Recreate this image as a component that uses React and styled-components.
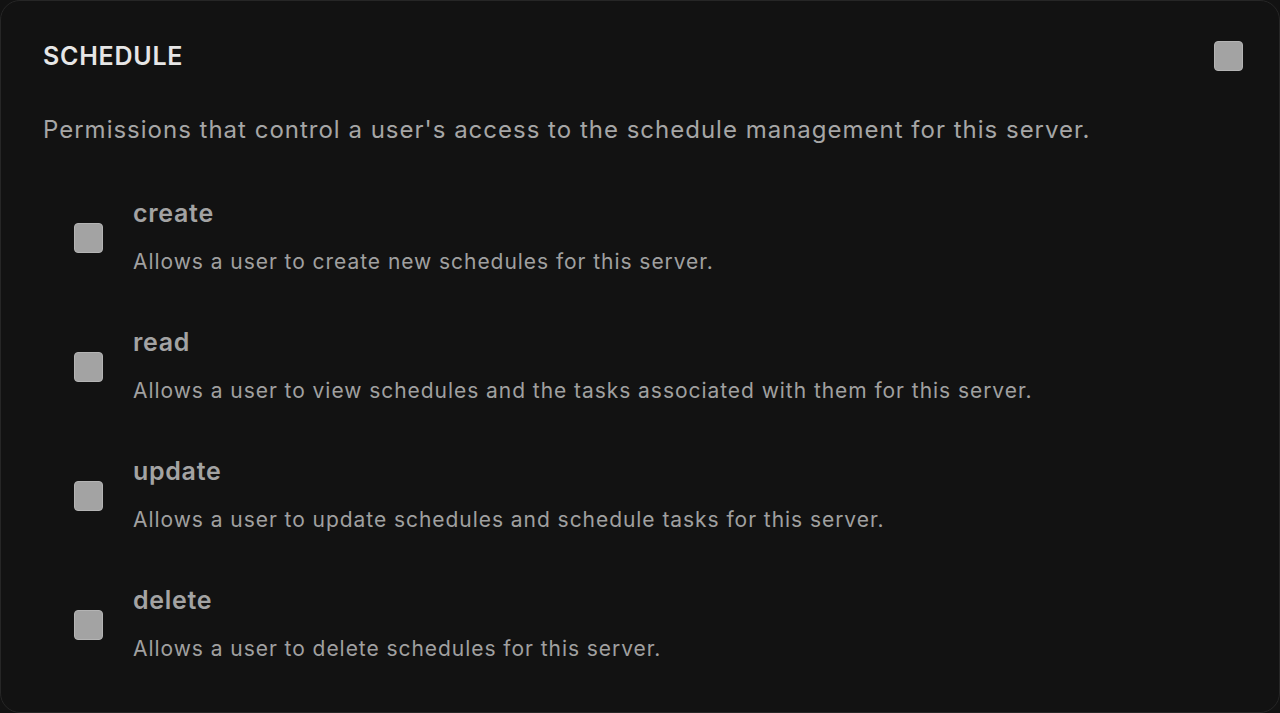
import React from 'react';
import styled, { createGlobalStyle } from 'styled-components';

const GlobalStyle = createGlobalStyle`
  html, body {
    margin: 0;
    padding: 0;
    background: #121212;
    font-family: Inter, "Noto Sans", "Liberation Sans", sans-serif;
    -webkit-font-smoothing: antialiased;
  }
`;

const Card = styled.section`
  box-sizing: border-box;
  width: 1280px;
  height: 713px;
  background: #121212;
  border: 1px solid #262626;
  border-radius: 20px;
  padding: 40px 36px 0 42px;
  overflow: hidden;
`;

const Header = styled.div`
  display: flex;
  align-items: center;
  justify-content: space-between;
  height: 30px;
`;

const Title = styled.h2`
  margin: 0;
  font-size: 25px;
  font-weight: 600;
  line-height: 30px;
  color: #e6e6e6;
  letter-spacing: 0.75px;
`;

const Box = styled.span`
  display: block;
  flex: none;
  width: 27px;
  height: 28px;
  border-radius: 4px;
  background: #a3a3a3;
  border: 1px solid #b4b4b4;
`;

const Intro = styled.p`
  margin: 44px 0 0;
  font-size: 24px;
  line-height: 30px;
  color: #a6a6a6;
  letter-spacing: 1px;
  white-space: nowrap;
`;

const List = styled.div`
  display: flex;
  flex-direction: column;
  gap: 52px;
  margin-top: 54px;
  padding-left: 31px;
`;

const Row = styled.div`
  display: flex;
  align-items: center;
  gap: 30px;
`;

const Text = styled.div`
  display: flex;
  flex-direction: column;
  gap: 21px;
`;

const Label = styled.span`
  font-size: 25px;
  font-weight: 600;
  line-height: 28px;
  color: #a3a3a3;
  letter-spacing: 0.7px;
`;

const Hint = styled.span`
  font-size: 21px;
  line-height: 28px;
  color: #a0a0a0;
  letter-spacing: 0.95px;
  white-space: nowrap;
`;

const perms = [
  ['create', 'Allows a user to create new schedules for this server.'],
  ['read', 'Allows a user to view schedules and the tasks associated with them for this server.'],
  ['update', 'Allows a user to update schedules and schedule tasks for this server.'],
  ['delete', 'Allows a user to delete schedules for this server.'],
];

const App = () => (
  <>
    <GlobalStyle />
    <Card>
      <Header>
        <Title>SCHEDULE</Title>
        <Box />
      </Header>
      <Intro>Permissions that control a user's access to the schedule management for this server.</Intro>
      <List>
        {perms.map(([name, desc]) => (
          <Row key={name}>
            <Box />
            <Text>
              <Label>{name}</Label>
              <Hint>{desc}</Hint>
            </Text>
          </Row>
        ))}
      </List>
    </Card>
  </>
);

export default App;
